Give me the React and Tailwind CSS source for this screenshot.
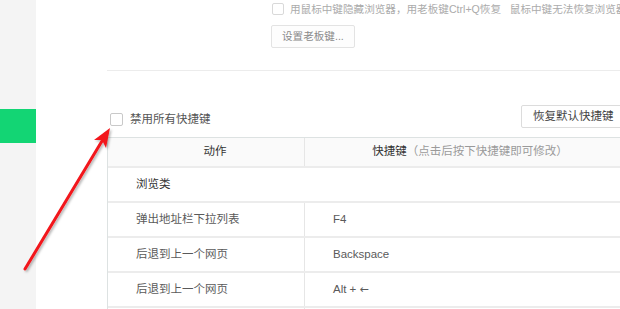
import React from "react";

const font = { fontFamily: '"Liberation Sans", "Noto Sans CJK SC", sans-serif' };

function Box({ className = "" }) {
  return <span className={"block shrink-0 border border-[#c9c9c9] rounded-[2px] bg-white " + className} />;
}

const rows = [
  ["弹出地址栏下拉列表", "F4"],
  ["后退到上一个网页", "Backspace"],
  ["后退到上一个网页", "alt"],
];

export default function App() {
  return (
    <div className="relative flex w-[620px] h-[309px] overflow-hidden bg-white" style={font}>
      <aside className="w-[36px] shrink-0 bg-[#f4f4f4] pt-[109px]">
        <div className="h-[34px] bg-[#13d574]" />
      </aside>
      <main className="flex-1 min-w-0 overflow-hidden pl-[71px]">
        <div className="w-[528px]">
          <div className="mt-[3px] flex items-center h-[12px] pl-[165px] gap-[6px] whitespace-nowrap">
            <Box className="w-[12px] h-[12px] border-[#d9d9d9]" />
            <span className="text-[10.6px] text-[#ababab] leading-none">
              用鼠标中键隐藏浏览器，用老板键Ctrl+Q恢复&nbsp;&nbsp;&nbsp;鼠标中键无法恢复浏览器
            </span>
          </div>
          <button className="mt-[10px] ml-[164px] h-[23px] px-[10px] border border-[#e3e3e3] rounded-[2px] bg-[#fdfdfd] text-[10.6px] text-[#8a8a8a] leading-none">
            设置老板键...
          </button>
          <div className="mt-[22px] border-t border-[#ececec]" />
          <div className="mt-[34px] flex items-start justify-between h-[23px]">
            <label className="flex items-center gap-[7px] pl-[3px] mt-[8px]">
              <Box className="w-[13px] h-[13px]" />
              <span className="text-[11.5px] text-[#555] leading-none">禁用所有快捷键</span>
            </label>
            <button className="w-[112px] mr-[2px] h-[23px] pl-[11px] text-left border border-[#dcdcdc] rounded-[2px] bg-white text-[11.5px] text-[#444] leading-none">
              恢复默认快捷键
            </button>
          </div>
          <div className="mt-[9px] border-l border-t border-[#dde2e2]">
            <div className="grid grid-cols-[196px_1fr] h-[30px] bg-[#fafafa] border-b-2 border-[#ececec] text-[11.5px]">
              <div className="flex items-center justify-center pl-[18px] text-[#333]">动作</div>
              <div className="flex items-center justify-center border-l border-[#e6e6e6] text-[#333]">
                快捷键<span className="text-[#9a9a9a]">（点击后按下快捷键即可修改）</span>
              </div>
            </div>
            <div className="h-[35px] flex items-center pl-[28px] border-b-2 border-[#ececec] text-[11.5px] text-[#333]">
              浏览类
            </div>
            {rows.map(([a, k], i) => (
              <div key={i} className="grid grid-cols-[196px_1fr] h-[35px] border-b-2 border-[#ececec] text-[11.5px] text-[#5a5a5a]">
                <div className="flex items-center pl-[28px]">{a}</div>
                <div className="flex items-center pl-[28px] border-l border-[#e6e6e6]">
                  {k === "alt" ? (
                    <span>
                      Alt + <span className="font-['DejaVu_Sans'] text-[11px]">←</span>
                    </span>
                  ) : (
                    k
                  )}
                </div>
              </div>
            ))}
            <div className="grid grid-cols-[196px_1fr] h-[35px]">
              <div />
              <div className="border-l border-[#e6e6e6]" />
            </div>
          </div>
        </div>
      </main>
      <svg className="absolute left-0 top-0 pointer-events-none" width="620" height="309" viewBox="0 0 620 309">
        <defs>
          <filter id="sh" x="-20%" y="-20%" width="140%" height="140%">
            <feDropShadow dx="1.5" dy="1.5" stdDeviation="1" floodColor="#000" floodOpacity="0.3" />
          </filter>
        </defs>
        <g filter="url(#sh)">
          <line x1="25" y1="269" x2="102" y2="141" stroke="#f2141a" strokeWidth="3" strokeLinecap="round" />
          <polygon points="110,128 94,140 102,140 106,148" fill="#f2141a" />
        </g>
      </svg>
    </div>
  );
}
